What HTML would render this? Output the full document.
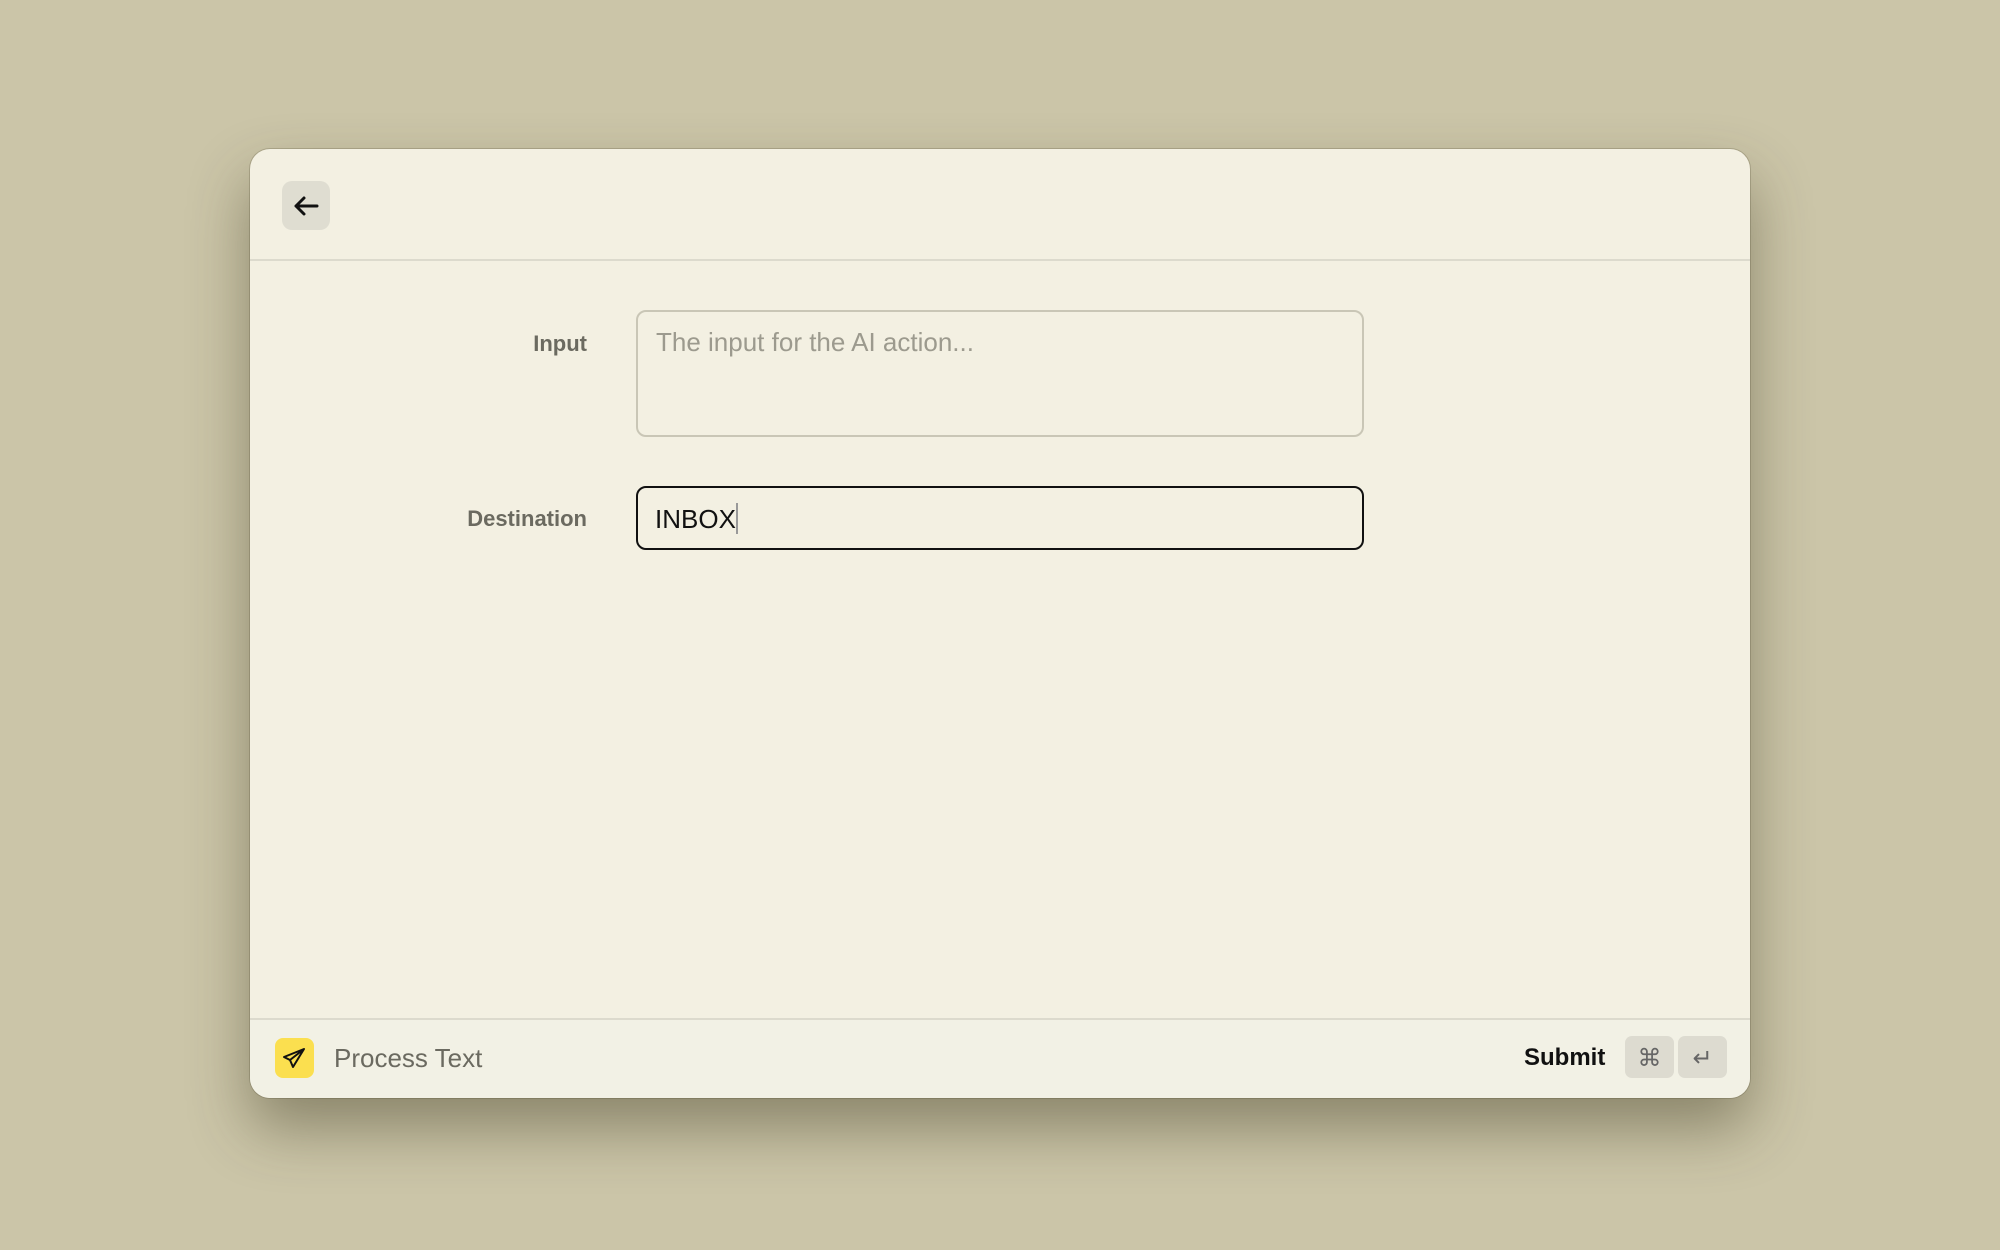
<!DOCTYPE html>
<html><head><meta charset="utf-8"><style>
*{box-sizing:border-box;margin:0;padding:0}
html,body{width:2000px;height:1250px;overflow:hidden;background:#cbc5a8;font-family:"Liberation Sans",sans-serif}
.win{position:absolute;left:250px;top:149px;width:1500px;height:949px;background:#f3f0e2;border-radius:20px;box-shadow:0 30px 60px rgba(60,55,30,.45),0 0 0 1px rgba(120,115,90,.35);overflow:hidden}
.back{position:absolute;left:32px;top:32px;width:48px;height:49px;background:#dfddd1;border-radius:10px}
.hline{position:absolute;left:0;top:110px;width:100%;height:2px;background:#dcdacd}
.lbl{position:absolute;right:1163px;text-align:right;font-size:22px;color:#6b6a60;font-weight:bold;white-space:nowrap}
.ta{position:absolute;left:386px;top:161px;width:728px;height:127px;border:2px solid #c9c6b6;border-radius:10px}
.ta span{position:absolute;left:18px;top:15px;font-size:26px;color:#9c9a8e}
.in{position:absolute;left:386px;top:337px;width:728px;height:64px;border:2.5px solid #111;border-radius:10px}
.in span{position:absolute;left:17px;top:15px;font-size:26px;color:#111}
.caret{display:inline-block;width:2px;height:31px;background:#999;vertical-align:-6px}
.foot{position:absolute;left:0;top:869px;width:100%;height:80px;background:#f2f1e5;border-top:2px solid #dcdacd}
.icon{position:absolute;left:25px;top:18px;width:39px;height:40px;background:#fbdf4f;border-radius:8px}
.pt{position:absolute;left:84px;top:23px;font-size:26px;color:#6b6a60}
.sub{position:absolute;left:1274px;top:24px;font-size:24px;font-weight:bold;color:#111}
.key{position:absolute;top:16px;width:49px;height:42px;background:#dddbd0;border-radius:7px;color:#666;font-size:24px;text-align:center;line-height:46px}
</style></head><body>
<div class="win">
 <div class="back"><svg width="48" height="49" viewBox="0 0 48 49"><path d="M35 25H14M22 17l-8 8 8 8" fill="none" stroke="#111" stroke-width="3" stroke-linecap="round" stroke-linejoin="round"/></svg></div>
 <div class="hline"></div>
 <div class="lbl" style="top:182px">Input</div>
 <div class="ta"><span>The input for the AI action...</span></div>
 <div class="lbl" style="top:357px">Destination</div>
 <div class="in"><span>INBOX<i class="caret"></i></span></div>
 <div class="foot">
  <div class="icon"><svg width="39" height="40" viewBox="0 0 39 40"><path d="M29 11 L9 19 L15 22 L18 29 Z M15 22 L29 11" fill="none" stroke="#111" stroke-width="2" stroke-linejoin="round"/></svg></div>
  <div class="pt">Process Text</div>
  <div class="sub">Submit</div>
  <div class="key" style="left:1375px">⌘</div>
  <div class="key" style="left:1428px">↵</div>
 </div>
</div>
</body></html>
